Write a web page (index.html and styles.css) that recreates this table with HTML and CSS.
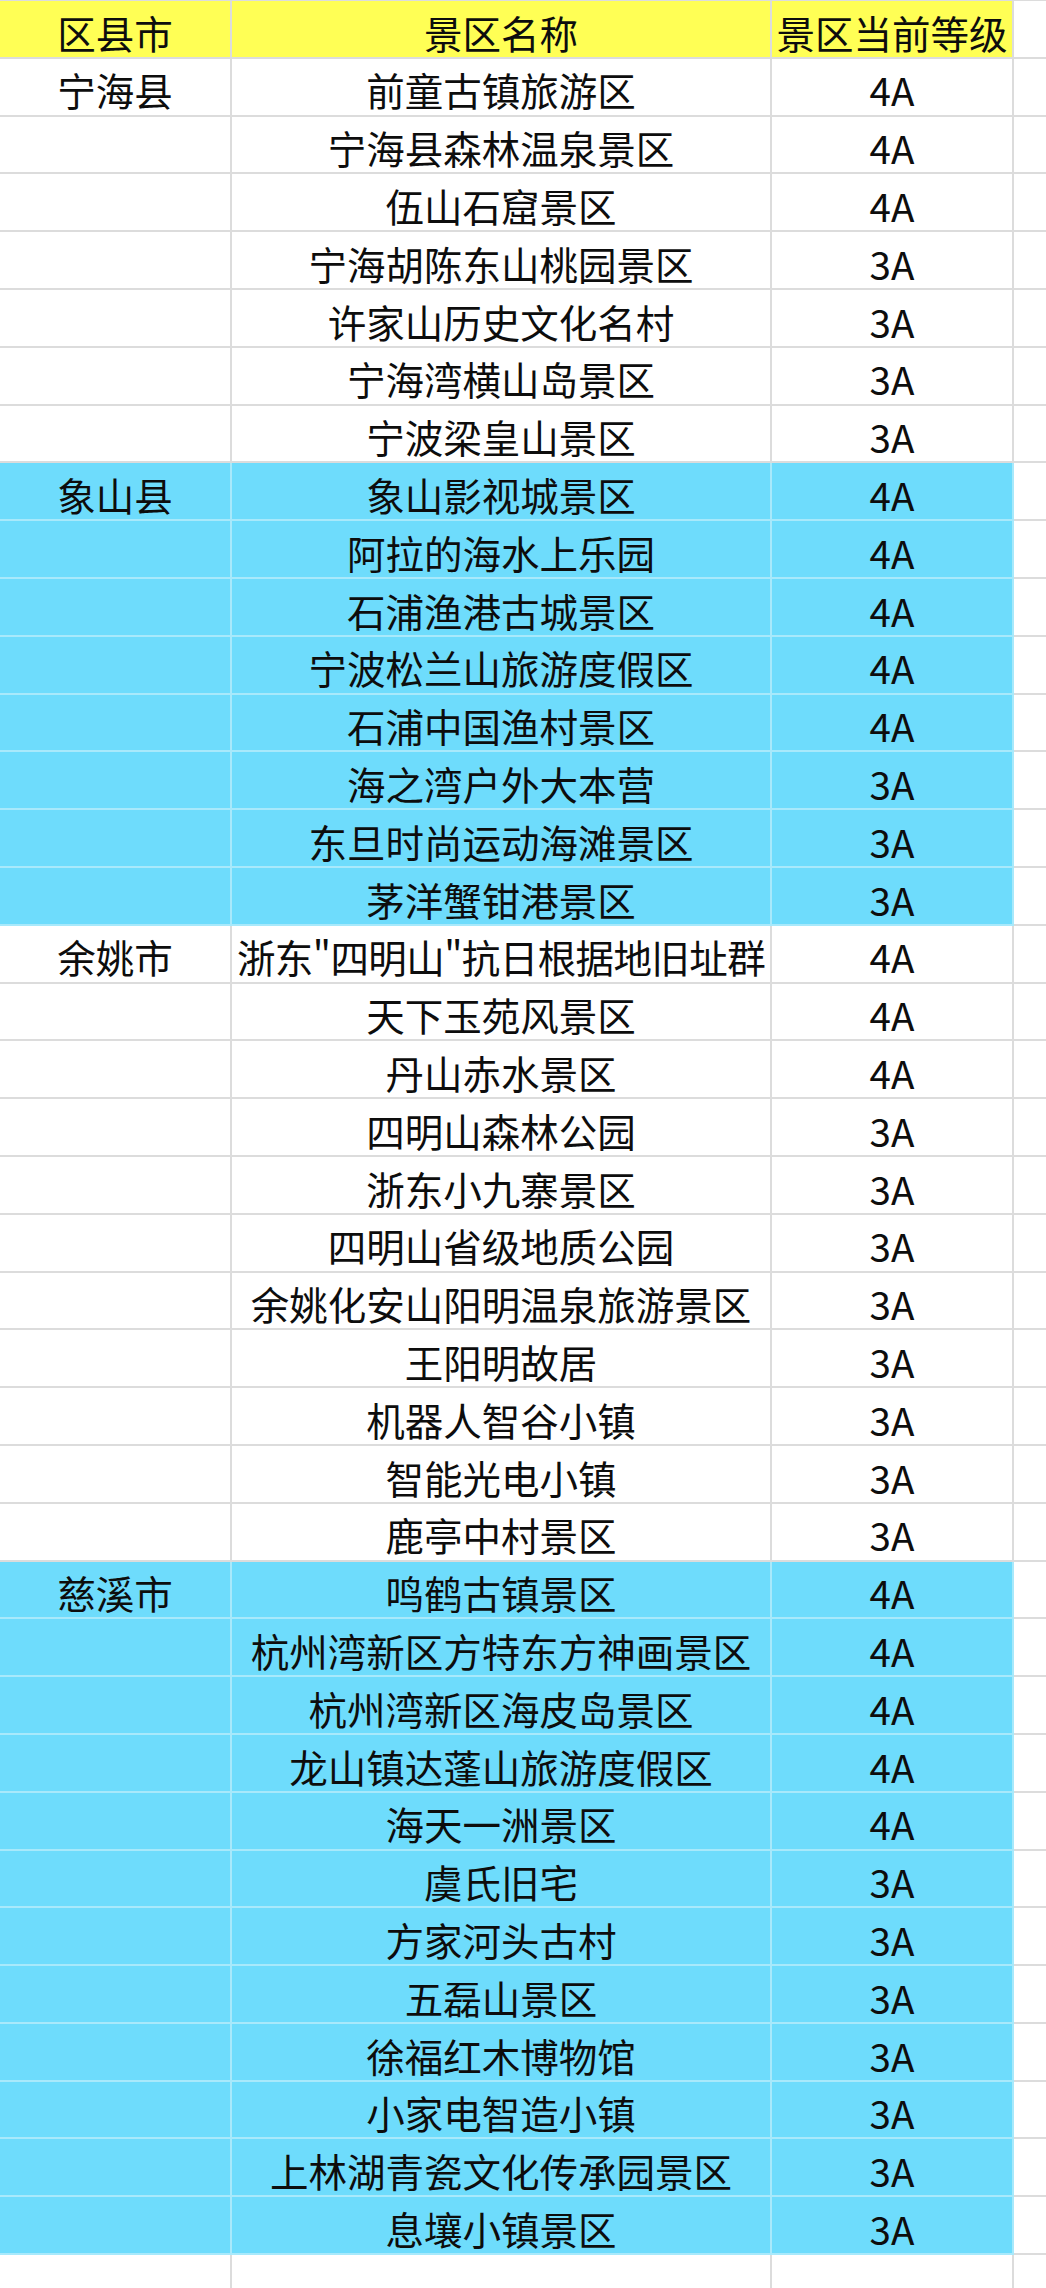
FILE: index.html
```html
<!DOCTYPE html>
<html lang="zh-CN">
<head>
<meta charset="utf-8">
<title>宁波景区等级</title>
<link rel="stylesheet" href="styles.css">
</head>
<body>
<div class="sheet">
  <div class="cell hd">区县市</div><div class="cell hd">景区名称</div><div class="cell hd">景区当前等级</div><div class="cell pad"></div>

  <div class="cell">宁海县</div><div class="cell">前童古镇旅游区</div><div class="cell">4A</div><div class="cell pad"></div>
  <div class="cell"></div><div class="cell">宁海县森林温泉景区</div><div class="cell">4A</div><div class="cell pad"></div>
  <div class="cell"></div><div class="cell">伍山石窟景区</div><div class="cell">4A</div><div class="cell pad"></div>
  <div class="cell"></div><div class="cell">宁海胡陈东山桃园景区</div><div class="cell">3A</div><div class="cell pad"></div>
  <div class="cell"></div><div class="cell">许家山历史文化名村</div><div class="cell">3A</div><div class="cell pad"></div>
  <div class="cell"></div><div class="cell">宁海湾横山岛景区</div><div class="cell">3A</div><div class="cell pad"></div>
  <div class="cell"></div><div class="cell">宁波梁皇山景区</div><div class="cell">3A</div><div class="cell pad"></div>

  <div class="cell blue">象山县</div><div class="cell blue">象山影视城景区</div><div class="cell blue">4A</div><div class="cell pad"></div>
  <div class="cell blue"></div><div class="cell blue">阿拉的海水上乐园</div><div class="cell blue">4A</div><div class="cell pad"></div>
  <div class="cell blue"></div><div class="cell blue">石浦渔港古城景区</div><div class="cell blue">4A</div><div class="cell pad"></div>
  <div class="cell blue"></div><div class="cell blue">宁波松兰山旅游度假区</div><div class="cell blue">4A</div><div class="cell pad"></div>
  <div class="cell blue"></div><div class="cell blue">石浦中国渔村景区</div><div class="cell blue">4A</div><div class="cell pad"></div>
  <div class="cell blue"></div><div class="cell blue">海之湾户外大本营</div><div class="cell blue">3A</div><div class="cell pad"></div>
  <div class="cell blue"></div><div class="cell blue">东旦时尚运动海滩景区</div><div class="cell blue">3A</div><div class="cell pad"></div>
  <div class="cell blue"></div><div class="cell blue">茅洋蟹钳港景区</div><div class="cell blue">3A</div><div class="cell pad"></div>

  <div class="cell">余姚市</div><div class="cell tight">浙东"四明山"抗日根据地旧址群</div><div class="cell">4A</div><div class="cell pad"></div>
  <div class="cell"></div><div class="cell">天下玉苑风景区</div><div class="cell">4A</div><div class="cell pad"></div>
  <div class="cell"></div><div class="cell">丹山赤水景区</div><div class="cell">4A</div><div class="cell pad"></div>
  <div class="cell"></div><div class="cell">四明山森林公园</div><div class="cell">3A</div><div class="cell pad"></div>
  <div class="cell"></div><div class="cell">浙东小九寨景区</div><div class="cell">3A</div><div class="cell pad"></div>
  <div class="cell"></div><div class="cell">四明山省级地质公园</div><div class="cell">3A</div><div class="cell pad"></div>
  <div class="cell"></div><div class="cell">余姚化安山阳明温泉旅游景区</div><div class="cell">3A</div><div class="cell pad"></div>
  <div class="cell"></div><div class="cell">王阳明故居</div><div class="cell">3A</div><div class="cell pad"></div>
  <div class="cell"></div><div class="cell">机器人智谷小镇</div><div class="cell">3A</div><div class="cell pad"></div>
  <div class="cell"></div><div class="cell">智能光电小镇</div><div class="cell">3A</div><div class="cell pad"></div>
  <div class="cell"></div><div class="cell">鹿亭中村景区</div><div class="cell">3A</div><div class="cell pad"></div>

  <div class="cell blue">慈溪市</div><div class="cell blue">鸣鹤古镇景区</div><div class="cell blue">4A</div><div class="cell pad"></div>
  <div class="cell blue"></div><div class="cell blue">杭州湾新区方特东方神画景区</div><div class="cell blue">4A</div><div class="cell pad"></div>
  <div class="cell blue"></div><div class="cell blue">杭州湾新区海皮岛景区</div><div class="cell blue">4A</div><div class="cell pad"></div>
  <div class="cell blue"></div><div class="cell blue">龙山镇达蓬山旅游度假区</div><div class="cell blue">4A</div><div class="cell pad"></div>
  <div class="cell blue"></div><div class="cell blue">海天一洲景区</div><div class="cell blue">4A</div><div class="cell pad"></div>
  <div class="cell blue"></div><div class="cell blue">虞氏旧宅</div><div class="cell blue">3A</div><div class="cell pad"></div>
  <div class="cell blue"></div><div class="cell blue">方家河头古村</div><div class="cell blue">3A</div><div class="cell pad"></div>
  <div class="cell blue"></div><div class="cell blue">五磊山景区</div><div class="cell blue">3A</div><div class="cell pad"></div>
  <div class="cell blue"></div><div class="cell blue">徐福红木博物馆</div><div class="cell blue">3A</div><div class="cell pad"></div>
  <div class="cell blue"></div><div class="cell blue">小家电智造小镇</div><div class="cell blue">3A</div><div class="cell pad"></div>
  <div class="cell blue"></div><div class="cell blue">上林湖青瓷文化传承园景区</div><div class="cell blue">3A</div><div class="cell pad"></div>
  <div class="cell blue"></div><div class="cell blue">息壤小镇景区</div><div class="cell blue">3A</div><div class="cell pad"></div>

  <div class="cell"></div><div class="cell"></div><div class="cell"></div><div class="cell pad"></div>
</div>
</body>
</html>
```

FILE: styles.css
```css
html, body {
  margin: 0;
  padding: 0;
  background: #ffffff;
  overflow: hidden;
}

.sheet {
  display: grid;
  grid-template-columns: 232px 540px 242px 1fr;
  grid-auto-rows: 57.8px;
  border-top: 1px solid #dcdcdc;
  font-family: "Noto Sans CJK SC", "Noto Sans", sans-serif;
  font-size: 38.5px;
  color: #0d0d0d;
}

.cell {
  box-sizing: border-box;
  border-right: 2px solid #dcdcdc;
  border-bottom: 2px solid #dcdcdc;
  display: flex;
  align-items: center;
  justify-content: center;
  padding-top: 6px;
  white-space: nowrap;
  line-height: 1;
}

.tight {
  letter-spacing: -0.6px;
}

.hd {
  background: #ffff55;
}

.blue {
  background: #6edcfc;
  border-color: #a8e9fb;
}

.pad {
  background: #ffffff;
  border-right: none;
}
```
